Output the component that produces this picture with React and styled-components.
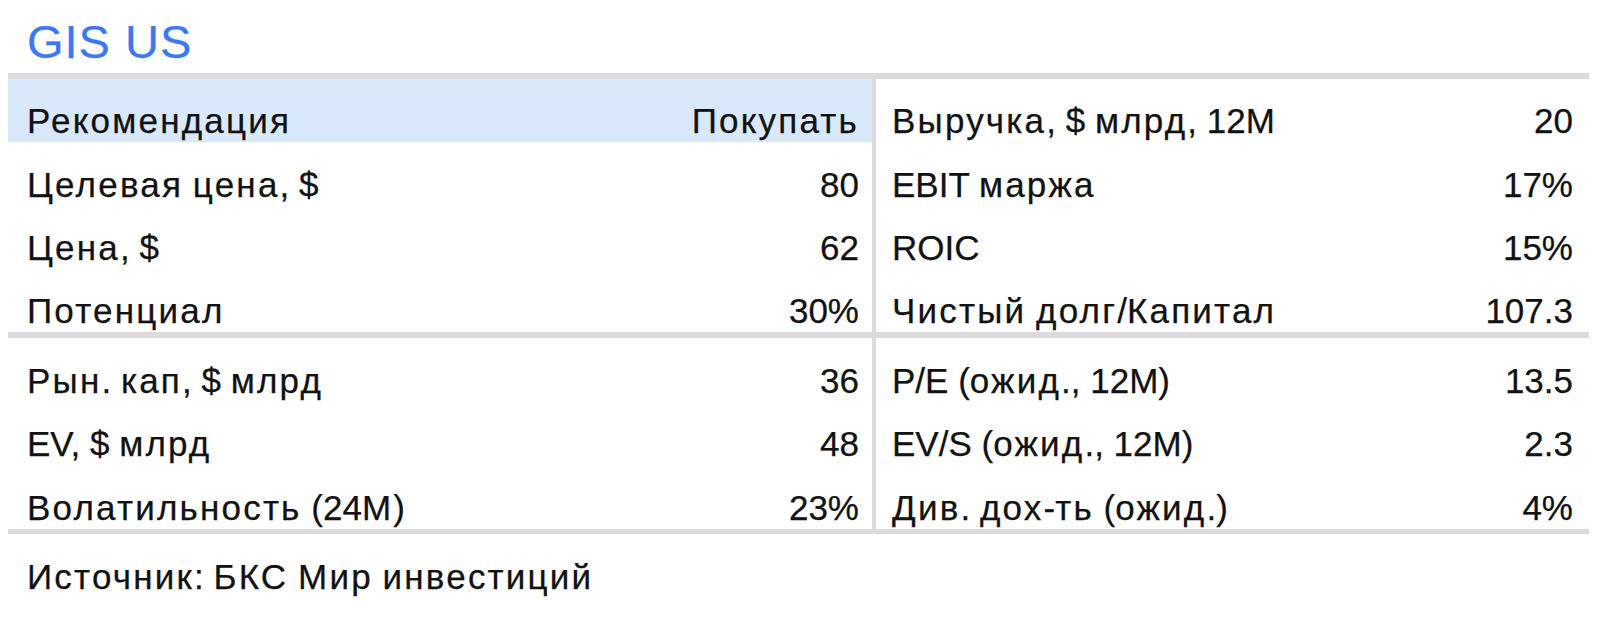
import React from "react";
import styled, { createGlobalStyle } from "styled-components";

const Global = createGlobalStyle`
  html, body { margin: 0; padding: 0; background: #ffffff; }
  body {
    font-family: "Liberation Sans", Arial, sans-serif;
    color: #121212;
    -webkit-text-stroke: 0.25px currentColor;
  }
`;

const LINE = "#dcdadd";

const Page = styled.div`
  width: 1603px;
  height: 620px;
  box-sizing: border-box;
  padding: 16px 14px 0 8px;
`;

const Title = styled.h1`
  margin: 0 0 0 19px;
  font-size: 47px;
  line-height: 52px;
  font-weight: 400;
  letter-spacing: 1px;
  color: #3a79f1;
  height: 57px;
`;

const Table = styled.div`
  width: 1581px;
  border-top: 6px solid ${LINE};
  border-bottom: 5px solid ${LINE};
`;

const Section = styled.div`
  display: grid;
  grid-template-columns: 868px 713px;
  height: ${(p) => p.$h}px;
  border-top: ${(p) => (p.$sep ? `6px solid ${LINE}` : "none")};
`;

const Column = styled.div`
  display: flex;
  flex-direction: column;
  border-right: ${(p) => (p.$left ? `4px solid ${LINE}` : "none")};
`;

const Row = styled.div`
  flex: 1;
  display: flex;
  align-items: flex-end;
  justify-content: space-between;
  padding: 0 ${(p) => (p.$left ? 13 : 16)}px 4px ${(p) => (p.$left ? 19 : 16)}px;
  background: ${(p) => (p.$hl ? "#d9e8fb" : "transparent")};
  font-size: 35px;
  line-height: 34px;
  white-space: nowrap;
`;

const Label = styled.span``;
const Value = styled.span``;

const Cyr = styled.span`
  letter-spacing: 2.2px;
`;

const Footer = styled.div`
  margin: 26px 0 0 19px;
  font-size: 35px;
  line-height: 34px;
`;

function Txt({ children }) {
  const parts = String(children).split(/([\u0400-\u04FF]+)/);
  return parts.map((p, i) =>
    /[\u0400-\u04FF]/.test(p) ? <Cyr key={i}>{p}</Cyr> : <React.Fragment key={i}>{p}</React.Fragment>
  );
}

const block1 = [
  [["Рекомендация", "Покупать", true], ["Выручка, $ млрд, 12М", "20"]],
  [["Целевая цена, $", "80"], ["EBIT маржа", "17%"]],
  [["Цена, $", "62"], ["ROIC", "15%"]],
  [["Потенциал", "30%"], ["Чистый долг/Капитал", "107.3"]],
];
const block2 = [
  [["Рын. кап, $ млрд", "36"], ["P/E (ожид., 12M)", "13.5"]],
  [["EV, $ млрд", "48"], ["EV/S (ожид., 12M)", "2.3"]],
  [["Волатильность (24М)", "23%"], ["Див. дох-ть (ожид.)", "4%"]],
];

function Block({ rows, h, sep }) {
  return (
    <Section $h={h} $sep={sep}>
      <Column $left>
        {rows.map(([l], i) => (
          <Row key={i} $left $hl={l[2]}>
            <Label><Txt>{l[0]}</Txt></Label>
            <Value><Txt>{l[1]}</Txt></Value>
          </Row>
        ))}
      </Column>
      <Column>
        {rows.map(([, r], i) => (
          <Row key={i}>
            <Label><Txt>{r[0]}</Txt></Label>
            <Value><Txt>{r[1]}</Txt></Value>
          </Row>
        ))}
      </Column>
    </Section>
  );
}

export default function App() {
  return (
    <>
      <Global />
      <Page>
        <Title>GIS US</Title>
        <Table>
          <Block rows={block1} h={253} />
          <Block rows={block2} h={191} sep />
        </Table>
        <Footer><Txt>Источник: БКС Мир инвестиций</Txt></Footer>
      </Page>
    </>
  );
}
